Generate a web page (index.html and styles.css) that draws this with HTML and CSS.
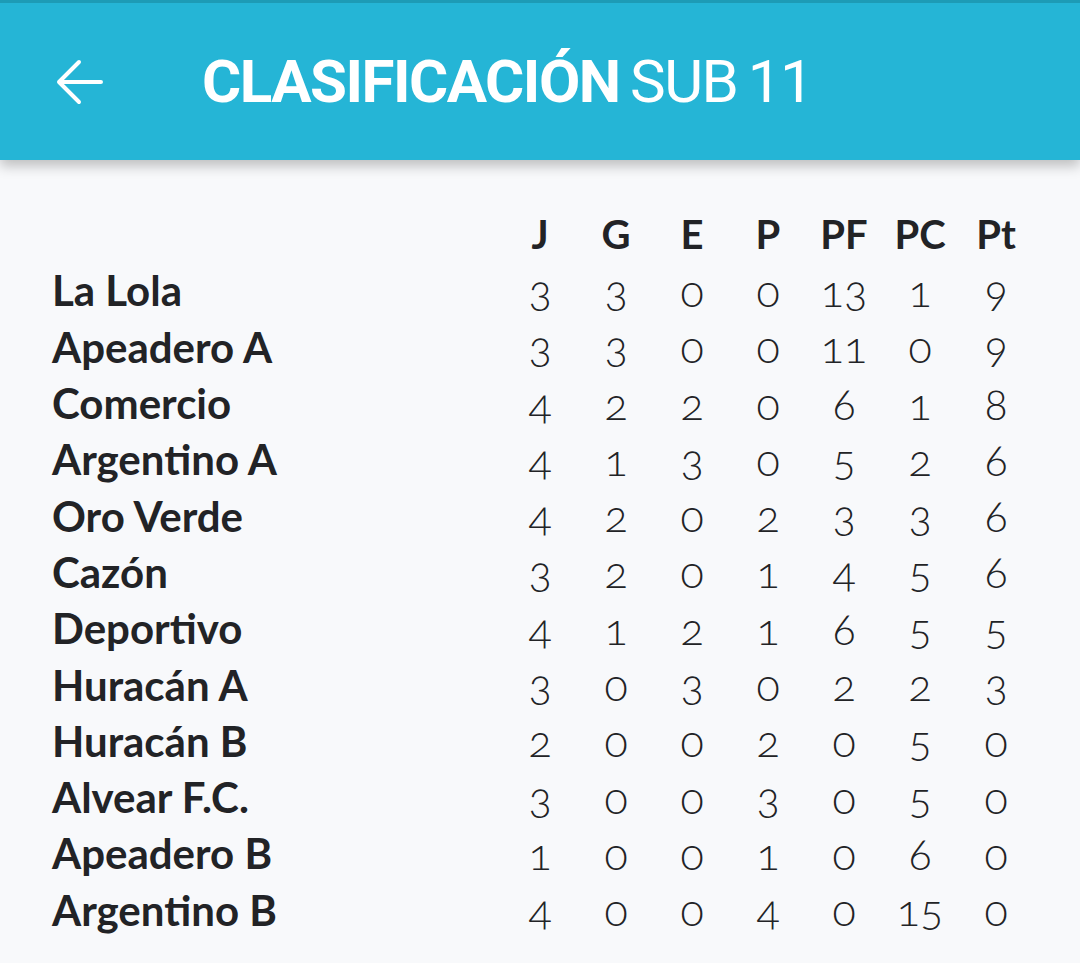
FILE: index.html
```html
<!DOCTYPE html>
<html lang="es">
<head>
<meta charset="utf-8">
<title>Clasificación Sub 11</title>
<link rel="stylesheet" href="styles.css">
</head>
<body>
<header class="appbar">
  <span class="back" aria-label="Volver">
    <svg width="48" height="48" viewBox="0 0 48 48"><path d="M3 24 H45 M23 4 L3 24 L23 44" fill="none" stroke="#fff" stroke-width="4" stroke-linecap="round" stroke-linejoin="round"/></svg>
  </span>
  <h1 class="title"><b>CLASIFICACIÓN</b> SUB 11</h1>
</header>
<main class="table">
  <div class="row head"><span class="name"></span><span>J</span><span>G</span><span>E</span><span>P</span><span>PF</span><span>PC</span><span>Pt</span></div>
  <div class="row"><span class="name">La Lola</span><span>3</span><span>3</span><span>0</span><span>0</span><span>13</span><span>1</span><span>9</span></div>
  <div class="row"><span class="name">Apeadero A</span><span>3</span><span>3</span><span>0</span><span>0</span><span>11</span><span>0</span><span>9</span></div>
  <div class="row"><span class="name">Comercio</span><span>4</span><span>2</span><span>2</span><span>0</span><span>6</span><span>1</span><span>8</span></div>
  <div class="row"><span class="name">Argentino A</span><span>4</span><span>1</span><span>3</span><span>0</span><span>5</span><span>2</span><span>6</span></div>
  <div class="row"><span class="name">Oro Verde</span><span>4</span><span>2</span><span>0</span><span>2</span><span>3</span><span>3</span><span>6</span></div>
  <div class="row"><span class="name">Cazón</span><span>3</span><span>2</span><span>0</span><span>1</span><span>4</span><span>5</span><span>6</span></div>
  <div class="row"><span class="name">Deportivo</span><span>4</span><span>1</span><span>2</span><span>1</span><span>6</span><span>5</span><span>5</span></div>
  <div class="row"><span class="name">Huracán A</span><span>3</span><span>0</span><span>3</span><span>0</span><span>2</span><span>2</span><span>3</span></div>
  <div class="row"><span class="name">Huracán B</span><span>2</span><span>0</span><span>0</span><span>2</span><span>0</span><span>5</span><span>0</span></div>
  <div class="row"><span class="name">Alvear F.C.</span><span>3</span><span>0</span><span>0</span><span>3</span><span>0</span><span>5</span><span>0</span></div>
  <div class="row"><span class="name">Apeadero B</span><span>1</span><span>0</span><span>0</span><span>1</span><span>0</span><span>6</span><span>0</span></div>
  <div class="row"><span class="name">Argentino B</span><span>4</span><span>0</span><span>0</span><span>4</span><span>0</span><span>15</span><span>0</span></div>
</main>
</body>
</html>
```
FILE: styles.css
```css
html, body {
  margin: 0;
  padding: 0;
}
body {
  background: #f8f9fb;
  font-family: Lato, "Open Sans", sans-serif;
  color: #222326;
  width: 1080px;
  height: 963px;
  overflow: hidden;
}
.appbar {
  height: 157px;
  border-top: 3px solid #1d9bb6;
  background: #25b5d6;
  display: flex;
  align-items: center;
  box-shadow: 0 6px 12px rgba(0, 0, 0, 0.24);
  position: relative;
  z-index: 1;
}
.back {
  display: flex;
  margin-left: 56px;
  width: 48px;
  height: 48px;
}
.title {
  margin: 0 0 0 98px;
  font-family: Roboto, sans-serif;
  font-weight: 400;
  font-size: 60px;
  color: #fff;
  letter-spacing: -1.5px;
  word-spacing: -3px;
  white-space: nowrap;
}
.title b {
  font-weight: 700;
}
.table {
  padding: 46px 46px 0 52px;
}
.row {
  display: grid;
  grid-template-columns: 1fr repeat(7, 76px);
  height: 56.3px;
  align-items: center;
}
.row span {
  text-align: center;
  font-size: 43px;
  font-weight: 300;
  font-variant-numeric: oldstyle-nums;
}
.row .name {
  text-align: left;
  font-weight: 700;
  font-size: 42px;
}
.row.head span {
  font-weight: 700;
  font-size: 40px;
}
```
